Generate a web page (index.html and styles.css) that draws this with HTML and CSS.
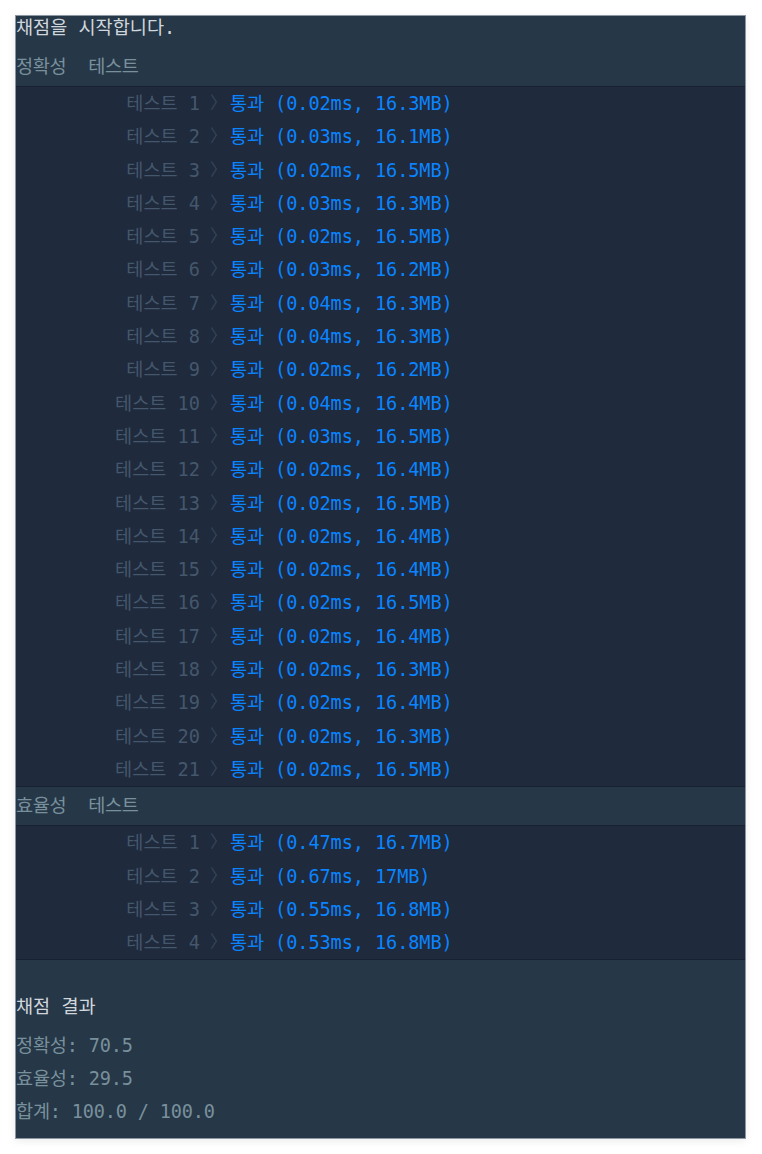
FILE: index.html
```html
<html>
<head>
<title>채점 결과</title>
<link rel="stylesheet" href="styles.css">
</head>
<body>
 <div id="console">
    <p class="intro">채점을 시작합니다.</p>
    <div class="group-title">정확성  테스트</div>
    <div class="group">
        <div class="row"><span class="label">테스트 1</span><span class="arrow">〉</span><span class="passed">통과 (0.02ms, 16.3MB)</span></div>
        <div class="row"><span class="label">테스트 2</span><span class="arrow">〉</span><span class="passed">통과 (0.03ms, 16.1MB)</span></div>
        <div class="row"><span class="label">테스트 3</span><span class="arrow">〉</span><span class="passed">통과 (0.02ms, 16.5MB)</span></div>
        <div class="row"><span class="label">테스트 4</span><span class="arrow">〉</span><span class="passed">통과 (0.03ms, 16.3MB)</span></div>
        <div class="row"><span class="label">테스트 5</span><span class="arrow">〉</span><span class="passed">통과 (0.02ms, 16.5MB)</span></div>
        <div class="row"><span class="label">테스트 6</span><span class="arrow">〉</span><span class="passed">통과 (0.03ms, 16.2MB)</span></div>
        <div class="row"><span class="label">테스트 7</span><span class="arrow">〉</span><span class="passed">통과 (0.04ms, 16.3MB)</span></div>
        <div class="row"><span class="label">테스트 8</span><span class="arrow">〉</span><span class="passed">통과 (0.04ms, 16.3MB)</span></div>
        <div class="row"><span class="label">테스트 9</span><span class="arrow">〉</span><span class="passed">통과 (0.02ms, 16.2MB)</span></div>
        <div class="row"><span class="label">테스트 10</span><span class="arrow">〉</span><span class="passed">통과 (0.04ms, 16.4MB)</span></div>
        <div class="row"><span class="label">테스트 11</span><span class="arrow">〉</span><span class="passed">통과 (0.03ms, 16.5MB)</span></div>
        <div class="row"><span class="label">테스트 12</span><span class="arrow">〉</span><span class="passed">통과 (0.02ms, 16.4MB)</span></div>
        <div class="row"><span class="label">테스트 13</span><span class="arrow">〉</span><span class="passed">통과 (0.02ms, 16.5MB)</span></div>
        <div class="row"><span class="label">테스트 14</span><span class="arrow">〉</span><span class="passed">통과 (0.02ms, 16.4MB)</span></div>
        <div class="row"><span class="label">테스트 15</span><span class="arrow">〉</span><span class="passed">통과 (0.02ms, 16.4MB)</span></div>
        <div class="row"><span class="label">테스트 16</span><span class="arrow">〉</span><span class="passed">통과 (0.02ms, 16.5MB)</span></div>
        <div class="row"><span class="label">테스트 17</span><span class="arrow">〉</span><span class="passed">통과 (0.02ms, 16.4MB)</span></div>
        <div class="row"><span class="label">테스트 18</span><span class="arrow">〉</span><span class="passed">통과 (0.02ms, 16.3MB)</span></div>
        <div class="row"><span class="label">테스트 19</span><span class="arrow">〉</span><span class="passed">통과 (0.02ms, 16.4MB)</span></div>
        <div class="row"><span class="label">테스트 20</span><span class="arrow">〉</span><span class="passed">통과 (0.02ms, 16.3MB)</span></div>
        <div class="row"><span class="label">테스트 21</span><span class="arrow">〉</span><span class="passed">통과 (0.02ms, 16.5MB)</span></div>
    </div>
    <div class="group-title">효율성  테스트</div>
    <div class="group">
        <div class="row"><span class="label">테스트 1</span><span class="arrow">〉</span><span class="passed">통과 (0.47ms, 16.7MB)</span></div>
        <div class="row"><span class="label">테스트 2</span><span class="arrow">〉</span><span class="passed">통과 (0.67ms, 17MB)</span></div>
        <div class="row"><span class="label">테스트 3</span><span class="arrow">〉</span><span class="passed">통과 (0.55ms, 16.8MB)</span></div>
        <div class="row"><span class="label">테스트 4</span><span class="arrow">〉</span><span class="passed">통과 (0.53ms, 16.8MB)</span></div>
    </div>
    <div class="summary">
        <p class="summary-title">채점 결과</p>
        <p class="score">정확성: 70.5</p>
        <p class="score">효율성: 29.5</p>
        <p class="score">합계: 100.0 / 100.0</p>
    </div>
 </div>
</body>
</html>
```
FILE: styles.css
```css
body {
    margin: 0;
    padding: 15px 15px 0 15px;
    background-color: #ffffff;
}
#console {
    width: 729px;
    background-color: #263747;
    border: 1px solid #8c96a2;
    box-shadow: 0 2px 8px rgba(0, 0, 0, 0.08);
    font-family: "DejaVu Sans Mono", "Noto Sans CJK KR", monospace;
    font-size: 18.6px;
}
p {
    margin: 0;
}
.intro {
    color: #d0d6dc;
    line-height: 24px;
    margin-bottom: 8px;
}
.group-title {
    color: #78909c;
    line-height: 28px;
    padding: 5px 0 5px 0;
    border-bottom: 1px solid #172131;
    white-space: pre;
    letter-spacing: -0.3px;
}
.group {
    background-color: #1f2a3c;
    border-bottom: 1px solid #172131;
}
.row {
    display: flex;
    height: 33.3px;
    line-height: 33.3px;
    white-space: pre;
}
.label {
    width: 184px;
    text-align: right;
    color: #44576c;
}
.arrow {
    width: 30px;
    padding-left: 10px;
    box-sizing: border-box;
    color: #34465a;
    font-size: 17px;
}
.passed {
    color: #0a84ff;
    letter-spacing: -0.1px;
}
.summary {
    padding: 30px 0 10px 0;
}
.summary-title {
    color: #d0d6dc;
    line-height: 34px;
    margin-bottom: 5px;
}
.score {
    color: #78909c;
    line-height: 33px;
    letter-spacing: -0.2px;
}
```
